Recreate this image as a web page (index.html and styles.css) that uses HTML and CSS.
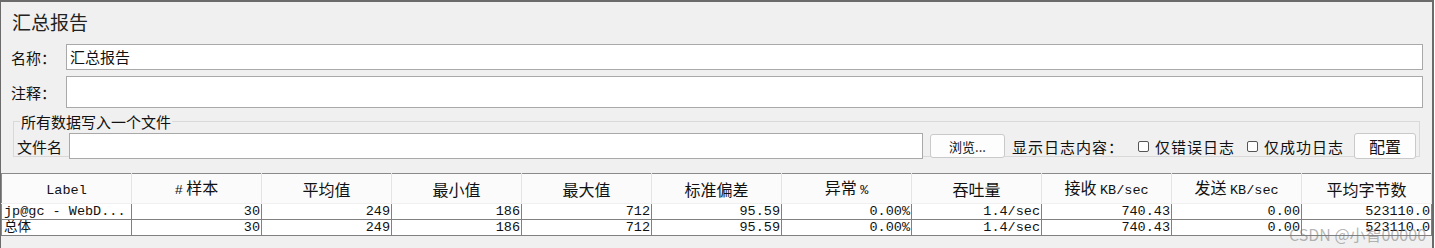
FILE: index.html
```html
<!DOCTYPE html>
<html lang="zh">
<head>
  <meta charset="UTF-8">
  <title>汇总报告</title>
  <link rel="stylesheet" href="styles.css">
</head>
<body>

  <div class="panel">
    <h1 class="title">汇总报告</h1>

    <div class="row name-row">
      <label>名称：</label>
      <div class="field">汇总报告</div>
    </div>

    <div class="row comment-row">
      <label>注释：</label>
      <div class="field tall"></div>
    </div>

    <fieldset class="group">
      <legend>所有数据写入一个文件</legend>
      <div class="file-row">
        <span>文件名</span>
        <div class="field file"></div>
        <button class="btn browse">浏览...</button>
        <span class="log-label">显示日志内容：</span>
        <span class="check first"><i></i>仅错误日志</span>
        <span class="check"><i></i>仅成功日志</span>
        <button class="btn config">配置</button>
      </div>
    </fieldset>

    <table class="results">
      <thead>
        <tr>
          <th><span class="mono">Label</span></th>
          <th><span class="mono">#</span> 样本</th>
          <th>平均值</th>
          <th>最小值</th>
          <th>最大值</th>
          <th>标准偏差</th>
          <th>异常 <span class="mono">%</span></th>
          <th>吞吐量</th>
          <th>接收 <span class="mono">KB/sec</span></th>
          <th>发送 <span class="mono">KB/sec</span></th>
          <th>平均字节数</th>
        </tr>
      </thead>
      <tbody>
        <tr>
          <td class="left">jp@gc - WebD...</td>
          <td>30</td><td>249</td><td>186</td><td>712</td><td>95.59</td>
          <td>0.00%</td><td>1.4/sec</td><td>740.43</td><td>0.00</td><td>523110.0</td>
        </tr>
        <tr>
          <td class="left">总体</td>
          <td>30</td><td>249</td><td>186</td><td>712</td><td>95.59</td>
          <td>0.00%</td><td>1.4/sec</td><td>740.43</td><td>0.00</td><td>523110.0</td>
        </tr>
      </tbody>
    </table>

    <div class="watermark">CSDN @小智00000</div>
  </div>

</body>
</html>
```

FILE: styles.css
```css
body {
  margin: 0;
  background: #fff;
  font-family: "Noto Sans CJK SC", "Noto Sans", sans-serif;
  color: #111;
}
.panel {
  position: relative;
  box-sizing: border-box;
  width: 1434px;
  height: 248px;
  background: #f0f0f0;
  border-top: 2px solid #6b6b6b;
  border-left: 1px solid #6b6b6b;
  border-right: 2px solid #6b6b6b;
}
.title {
  margin: 0;
  padding: 8px 0 0 11px;
  height: 32px;
  box-sizing: border-box;
  font-size: 19px;
  font-weight: normal;
  line-height: 24px;
  color: #222;
}
.row {
  display: flex;
  align-items: center;
  padding-left: 10px;
}
.row label {
  width: 55px;
  font-size: 15px;
}
.name-row {
  margin-top: 10px;
}
.comment-row {
  margin-top: 6px;
}
.field {
  box-sizing: border-box;
  width: 1357px;
  height: 26px;
  background: #fff;
  border: 1px solid #a9a9a9;
  font-size: 15px;
  line-height: 23px;
  padding-left: 3px;
}
.field.tall {
  height: 32px;
}
.group {
  margin: 5px 0 0 12px;
  padding: 3px 0 0 3px;
  width: 1407px;
  height: 44px;
  box-sizing: border-box;
  border: 1px solid #d9d9d9;
}
.group legend {
  padding: 0 1px;
  margin-left: 3px;
  font-size: 15px;
  line-height: 17px;
}
.file-row {
  display: flex;
  align-items: center;
  font-size: 15px;
  white-space: nowrap;
}
.file-row > * {
  flex-shrink: 0;
}
.file-row .file {
  width: 854px;
  margin-left: 7px;
}
.btn {
  box-sizing: border-box;
  height: 24px;
  background: #fdfdfd;
  border: 1px solid #c9c9c9;
  border-radius: 3px;
  font-family: inherit;
  color: #111;
  padding: 0;
}
.browse {
  width: 75px;
  margin-left: 7px;
  font-size: 13px;
}
.log-label {
  margin-left: 7px;
  letter-spacing: 1px;
}
.check {
  display: flex;
  align-items: center;
  margin-left: 12px;
  letter-spacing: 1px;
}
.check.first {
  margin-left: 14px;
}
.check i {
  display: inline-block;
  box-sizing: border-box;
  width: 11px;
  height: 11px;
  border: 1px solid #555;
  border-radius: 2px;
  margin-right: 6px;
  background: #fff;
}
.config {
  width: 62px;
  height: 26px;
  margin-left: 10px;
  font-size: 16px;
}
.results {
  margin-top: 16px;
  border-collapse: collapse;
  table-layout: fixed;
  width: 1431px;
  border-top: 1px solid #8a8a8a;
  border-left: 1px solid #8a8a8a;
}
.results th {
  width: 129px;
  height: 29px;
  padding: 0;
  background: #fbfbfb;
  border-right: 1px solid #e4e4e4;
  border-bottom: 1px solid #f0f0f0;
  font-size: 16px;
  font-weight: normal;
  line-height: 20px;
  text-align: center;
}
.mono {
  font-family: "Liberation Mono", monospace;
  font-size: 13.5px;
}
.results td {
  height: 15px;
  padding: 0 1px 0 0;
  background: #fff;
  border-right: 1px solid #808080;
  border-bottom: 1px solid #808080;
  font-family: "Liberation Mono", "Noto Sans CJK SC", monospace;
  font-size: 13.5px;
  line-height: 15px;
  text-align: right;
  white-space: nowrap;
  overflow: hidden;
  color: #111;
}
.results td.left {
  text-align: left;
  padding-left: 2px;
}
.watermark {
  position: absolute;
  left: 1288px;
  top: 220px;
  font-size: 16px;
  color: rgba(120, 120, 120, 0.55);
}
```
